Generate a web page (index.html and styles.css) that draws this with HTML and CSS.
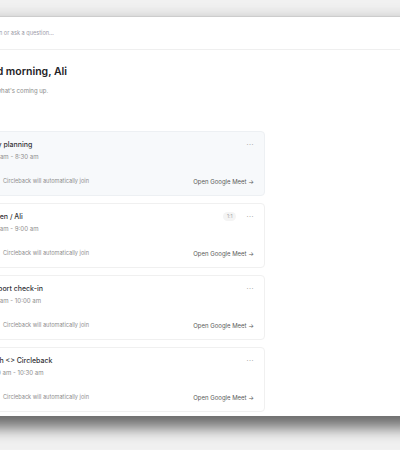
FILE: index.html
```html
<!DOCTYPE html>
<html lang="en">
<head>
<meta charset="utf-8">
<title>Home</title>
<link rel="stylesheet" href="styles.css">
</head>
<body>
  <div class="window">
    <header class="searchbar">
      <svg class="search-icon" viewBox="0 0 16 16" width="8" height="8" aria-hidden="true">
        <circle cx="7" cy="7" r="5" fill="none" stroke="#9b9ba8" stroke-width="1.6"/>
        <path d="M11 11l3.5 3.5" stroke="#9b9ba8" stroke-width="1.6" stroke-linecap="round"/>
      </svg>
      <span class="search-text">Search a person or ask a question...</span>
    </header>

    <main class="main">
      <h1 class="greeting">Good morning, Ali</h1>
      <p class="lede">Here's what's coming up.</p>

      <section class="meetings">
        <article class="card card-active">
          <div class="card-top">
            <div class="card-title">Daily planning</div>
            <div class="card-tools"><span class="more">···</span></div>
          </div>
          <div class="card-time">8:00 am - 8:30 am</div>
          <div class="card-foot">
            <span class="join">
              <svg class="bot" viewBox="0 0 12 12" width="8" height="8" aria-hidden="true">
                <circle cx="6" cy="6" r="4.5" fill="none" stroke="#9a9a9a" stroke-width="1.2"/>
                <path d="M4 6.2l1.4 1.3L8 4.8" fill="none" stroke="#9a9a9a" stroke-width="1.2"/>
              </svg>
              Circleback will automatically join
            </span>
            <span class="open">Open Google Meet →</span>
          </div>
        </article>

        <article class="card">
          <div class="card-top">
            <div class="card-title">Steven / Ali</div>
            <div class="card-tools"><span class="tag">1:1</span><span class="more">···</span></div>
          </div>
          <div class="card-time">8:30 am - 9:00 am</div>
          <div class="card-foot">
            <span class="join">
              <svg class="bot" viewBox="0 0 12 12" width="8" height="8" aria-hidden="true">
                <circle cx="6" cy="6" r="4.5" fill="none" stroke="#9a9a9a" stroke-width="1.2"/>
                <path d="M4 6.2l1.4 1.3L8 4.8" fill="none" stroke="#9a9a9a" stroke-width="1.2"/>
              </svg>
              Circleback will automatically join
            </span>
            <span class="open">Open Google Meet →</span>
          </div>
        </article>

        <article class="card">
          <div class="card-top">
            <div class="card-title">Support check-in</div>
            <div class="card-tools"><span class="more">···</span></div>
          </div>
          <div class="card-time">9:30 am - 10:00 am</div>
          <div class="card-foot">
            <span class="join">
              <svg class="bot" viewBox="0 0 12 12" width="8" height="8" aria-hidden="true">
                <circle cx="6" cy="6" r="4.5" fill="none" stroke="#9a9a9a" stroke-width="1.2"/>
                <path d="M4 6.2l1.4 1.3L8 4.8" fill="none" stroke="#9a9a9a" stroke-width="1.2"/>
              </svg>
              Circleback will automatically join
            </span>
            <span class="open">Open Google Meet →</span>
          </div>
        </article>

        <article class="card">
          <div class="card-top">
            <div class="card-title">Fresh &lt;&gt; Circleback</div>
            <div class="card-tools"><span class="more">···</span></div>
          </div>
          <div class="card-time">10:00 am - 10:30 am</div>
          <div class="card-foot">
            <span class="join">
              <svg class="bot" viewBox="0 0 12 12" width="8" height="8" aria-hidden="true">
                <circle cx="6" cy="6" r="4.5" fill="none" stroke="#9a9a9a" stroke-width="1.2"/>
                <path d="M4 6.2l1.4 1.3L8 4.8" fill="none" stroke="#9a9a9a" stroke-width="1.2"/>
              </svg>
              Circleback will automatically join
            </span>
            <span class="open">Open Google Meet →</span>
          </div>
        </article>
      </section>
    </main>
  </div>
</body>
</html>
```

FILE: styles.css
```css
* { box-sizing: border-box; }

html, body {
  margin: 0;
  height: 100%;
}

body {
  background: #f1f1f1;
  font-family: Inter, "Noto Sans", sans-serif;
  overflow: hidden;
}

.window {
  margin-top: 16px;
  margin-left: -64px;
  width: 480px;
  height: 400px;
  background: #ffffff;
  border-top: 1px solid #cdcdcd;
  box-shadow: 0 12px 14px rgba(0, 0, 0, 0.55), 0 -4px 10px rgba(0, 0, 0, 0.08);
}

.searchbar {
  height: 33px;
  display: flex;
  align-items: center;
  gap: 5px;
  padding-left: 10px;
  border-bottom: 1px solid #efefef;
}

.search-text {
  font-size: 5.6px;
  color: #9b9ba8;
}

.main {
  padding: 15px 0 0 40px;
}

.greeting {
  margin: 0;
  font-size: 10.5px;
  line-height: 14px;
  font-weight: 600;
  color: #222226;
}

.lede {
  margin: 7px 0 0;
  font-size: 6px;
  line-height: 9px;
  color: #8b8b8b;
}

.meetings {
  margin-top: 36px;
  width: 289px;
  display: flex;
  flex-direction: column;
  gap: 7px;
}

.card {
  height: 65px;
  display: flex;
  flex-direction: column;
  padding: 8px 10px 9px 8px;
  background: #ffffff;
  border: 1px solid #f0f0f0;
  border-radius: 4px;
}

.card-active {
  background: #f7f9fb;
  border-color: #edf0f3;
}

.card-top {
  display: flex;
  align-items: center;
  justify-content: space-between;
  height: 9px;
}

.card-title {
  font-size: 7px;
  font-weight: 500;
  color: #333337;
}

.card-tools {
  display: flex;
  align-items: center;
  gap: 10px;
}

.tag {
  font-size: 5px;
  line-height: 9px;
  padding: 0 4px;
  border-radius: 5px;
  background: #f4f4f4;
  color: #a5a5a5;
}

.more {
  font-size: 7px;
  color: #a8a8a8;
  letter-spacing: 0.5px;
}

.card-time {
  margin-top: 3px;
  font-size: 6.1px;
  line-height: 9px;
  color: #8c8c8c;
}

.card-foot {
  margin-top: auto;
  display: flex;
  align-items: center;
  justify-content: space-between;
  font-size: 5.6px;
  line-height: 9px;
}

.join {
  display: flex;
  align-items: center;
  gap: 10px;
  color: #8e8e8e;
}

.open {
  font-size: 6px;
  color: #5a5a5a;
}
```
